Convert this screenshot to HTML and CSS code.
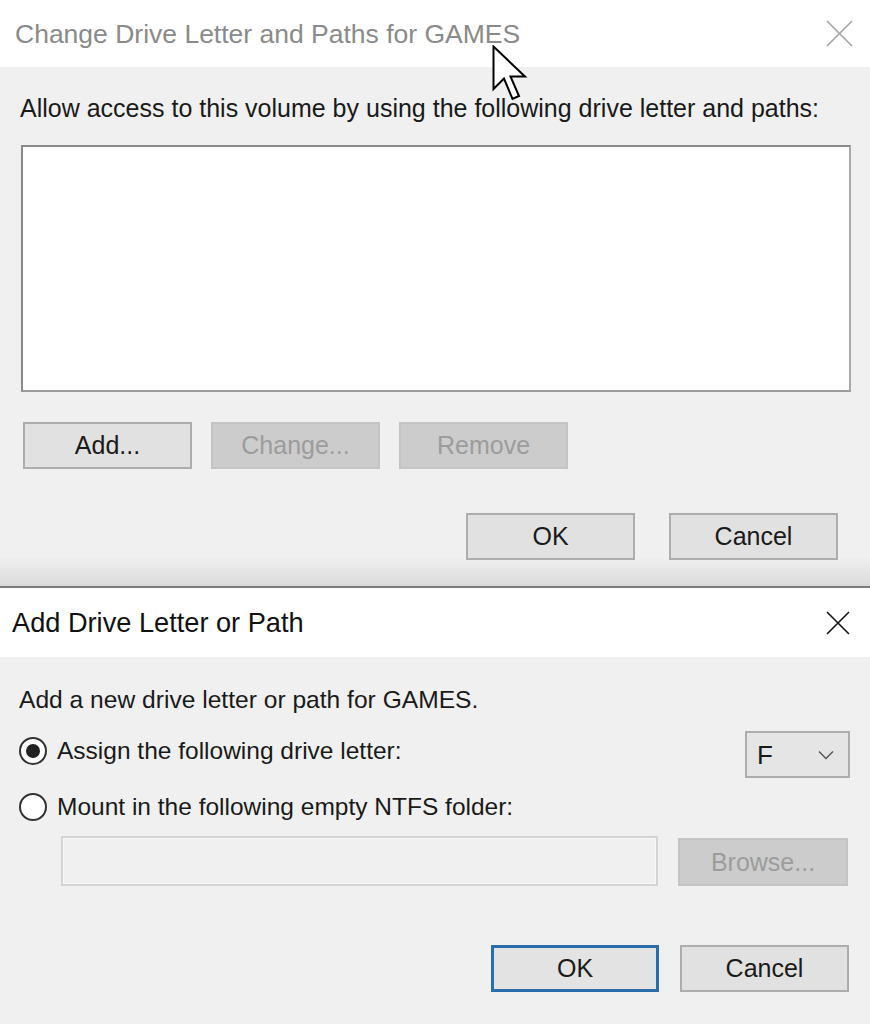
FILE: index.html
```html
<!DOCTYPE html>
<html lang="en">
<head>
<meta charset="utf-8">
<title>Change Drive Letter and Paths</title>
<link rel="stylesheet" href="styles.css">
</head>
<body>
<div class="screen">
  <section class="dialog dialog-main">
    <header class="titlebar titlebar-inactive">
      <span class="title">Change Drive Letter and Paths for GAMES</span>
      <svg class="close close-inactive" width="27" height="27" viewBox="0 0 27 27"><path d="M1 1 L26 26 M26 1 L1 26" stroke="#a3a3a3" stroke-width="1.6" fill="none"/></svg>
    </header>
    <div class="body body-main">
      <p class="label label-allow">Allow access to this volume by using the following drive letter and paths:</p>
      <div class="listbox"></div>
      <div class="row row-actions">
        <button class="btn">Add...</button>
        <button class="btn btn-disabled">Change...</button>
        <button class="btn btn-disabled">Remove</button>
      </div>
      <div class="row row-confirm row-confirm-main">
        <button class="btn">OK</button>
        <button class="btn">Cancel</button>
      </div>
    </div>
    <svg class="cursor" width="36" height="60" viewBox="0 0 36 60"><path d="M1.5 1.5 L1.5 44 L12 33.5 L20.5 54 L27 51 L18.5 31.5 L33 31.5 Z" fill="#fff" stroke="#000" stroke-width="2" stroke-linejoin="miter"/></svg>
  </section>

  <section class="dialog dialog-add">
    <header class="titlebar">
      <span class="title title-active">Add Drive Letter or Path</span>
      <svg class="close" width="24" height="24" viewBox="0 0 24 24"><path d="M1 1 L23 23 M23 1 L1 23" stroke="#111" stroke-width="1.6" fill="none"/></svg>
    </header>
    <div class="body body-add">
      <p class="label label-add">Add a new drive letter or path for GAMES.</p>
      <div class="row row-assign">
        <label class="option">
          <span class="radio radio-checked"></span>
          <span class="option-text">Assign the following drive letter:</span>
        </label>
        <div class="combo">
          <span class="combo-value">F</span>
          <svg class="chevron" width="16" height="10" viewBox="0 0 16 10"><path d="M1 1.5 L8 8.5 L15 1.5" stroke="#555" stroke-width="1.5" fill="none"/></svg>
        </div>
      </div>
      <div class="row row-mount">
        <label class="option">
          <span class="radio"></span>
          <span class="option-text">Mount in the following empty NTFS folder:</span>
        </label>
      </div>
      <div class="row row-folder">
        <div class="textfield"></div>
        <button class="btn btn-disabled btn-browse">Browse...</button>
      </div>
      <div class="row row-confirm row-confirm-add">
        <button class="btn btn-default">OK</button>
        <button class="btn">Cancel</button>
      </div>
    </div>
  </section>
</div>
</body>
</html>
```

FILE: styles.css
```css
* { box-sizing: border-box; }

html, body {
  margin: 0;
  padding: 0;
  background: #f0f0f0;
}

body {
  font-family: "Liberation Sans", Arial, sans-serif;
  color: #1a1a1a;
}

.screen {
  width: 870px;
  height: 1024px;
  display: flex;
  flex-direction: column;
  overflow: hidden;
}

.dialog {
  position: relative;
  display: flex;
  flex-direction: column;
}

.titlebar {
  background: #fff;
  display: flex;
  align-items: center;
  justify-content: space-between;
}

.dialog-main .titlebar {
  height: 67px;
  padding: 0 17px 0 15px;
}

.dialog-add .titlebar {
  height: 69px;
  padding: 0 20px 0 12px;
}

.title {
  font-size: 26.5px;
  line-height: 30px;
  color: #8a8a8a;
  white-space: nowrap;
}

.titlebar-inactive .title {
  margin-top: 0;
}

.title-active {
  font-size: 27.2px;
  color: #111;
}

.close { display: block; }

.body {
  background: #f0f0f0;
  display: flex;
  flex-direction: column;
}

.body-main {
  height: 521px;
  padding: 0 32px 0 20px;
  background: linear-gradient(to bottom, #f0f0f0 0, #f0f0f0 490px, #dadada 519px);
  border-bottom: 2px solid #7c7c7c;
}

.label {
  margin: 0;
  font-size: 25px;
  line-height: 30px;
  white-space: nowrap;
}

.label-allow { margin-top: 26px; }

.listbox {
  margin-top: 22px;
  margin-left: 1px;
  width: 830px;
  height: 247px;
  background: #fff;
  border: 2px solid #8a8a8a;
  border-right-color: #a8a8a8;
  border-bottom-color: #9a9a9a;
}

.row { display: flex; }

.row-actions {
  margin-top: 30px;
  margin-left: 3px;
  gap: 19px;
}

.btn {
  width: 169px;
  height: 47px;
  padding: 0;
  font-family: inherit;
  font-size: 25px;
  color: #1a1a1a;
  background: #e1e1e1;
  border: 2px solid #adadad;
  border-radius: 0;
}

.btn-disabled {
  background: #cccccc;
  border-color: #c4c4c4;
  color: #9c9c9c;
}

.row-confirm { justify-content: flex-end; }

.row-confirm-main {
  margin-top: 44px;
  gap: 34px;
}

.cursor {
  position: absolute;
  left: 492px;
  top: 45px;
}

.body-add {
  flex: 1;
  padding: 0 22px 0 19px;
}

.label-add {
  margin-top: 28px;
  font-size: 24.6px;
}

.option {
  display: flex;
  align-items: center;
  gap: 10px;
  height: 30px;
}

.radio {
  width: 28px;
  height: 28px;
  border-radius: 50%;
  border: 2px solid #333;
  background: #fff;
  display: flex;
  align-items: center;
  justify-content: center;
}

.radio-checked::after {
  content: "";
  width: 14px;
  height: 14px;
  border-radius: 50%;
  background: #222;
}

.option-text {
  font-size: 24.5px;
  line-height: 30px;
  white-space: nowrap;
}

.row-assign {
  margin-top: 16px;
  height: 47px;
  justify-content: space-between;
  align-items: flex-start;
}

.row-assign .option { margin-top: 5px; }

.combo {
  width: 105px;
  height: 47px;
  margin-right: -2px;
  background: #e5e5e5;
  border: 2px solid #adadad;
  display: flex;
  align-items: center;
  justify-content: space-between;
  padding: 0 14px 0 10px;
}

.combo-value {
  font-size: 26px;
  line-height: 30px;
}

.chevron { display: block; }

.row-mount { margin-top: 14px; }

.row-folder {
  margin-top: 14px;
  padding-left: 42px;
  align-items: flex-start;
  gap: 20px;
}

.textfield {
  width: 597px;
  height: 50px;
  background: #f0f0f0;
  border: 2px solid #d4d4d4;
  box-shadow: inset 0 0 0 1px #f8f8f8;
}

.btn-browse {
  margin-top: 2px;
  width: 170px;
  height: 48px;
}

.row-confirm-add {
  margin-top: 59px;
  gap: 21px;
  margin-right: -1px;
}

.btn-default {
  width: 168px;
  border: 3px solid #2b6cab;
  background: #e3e3e3;
}
```
